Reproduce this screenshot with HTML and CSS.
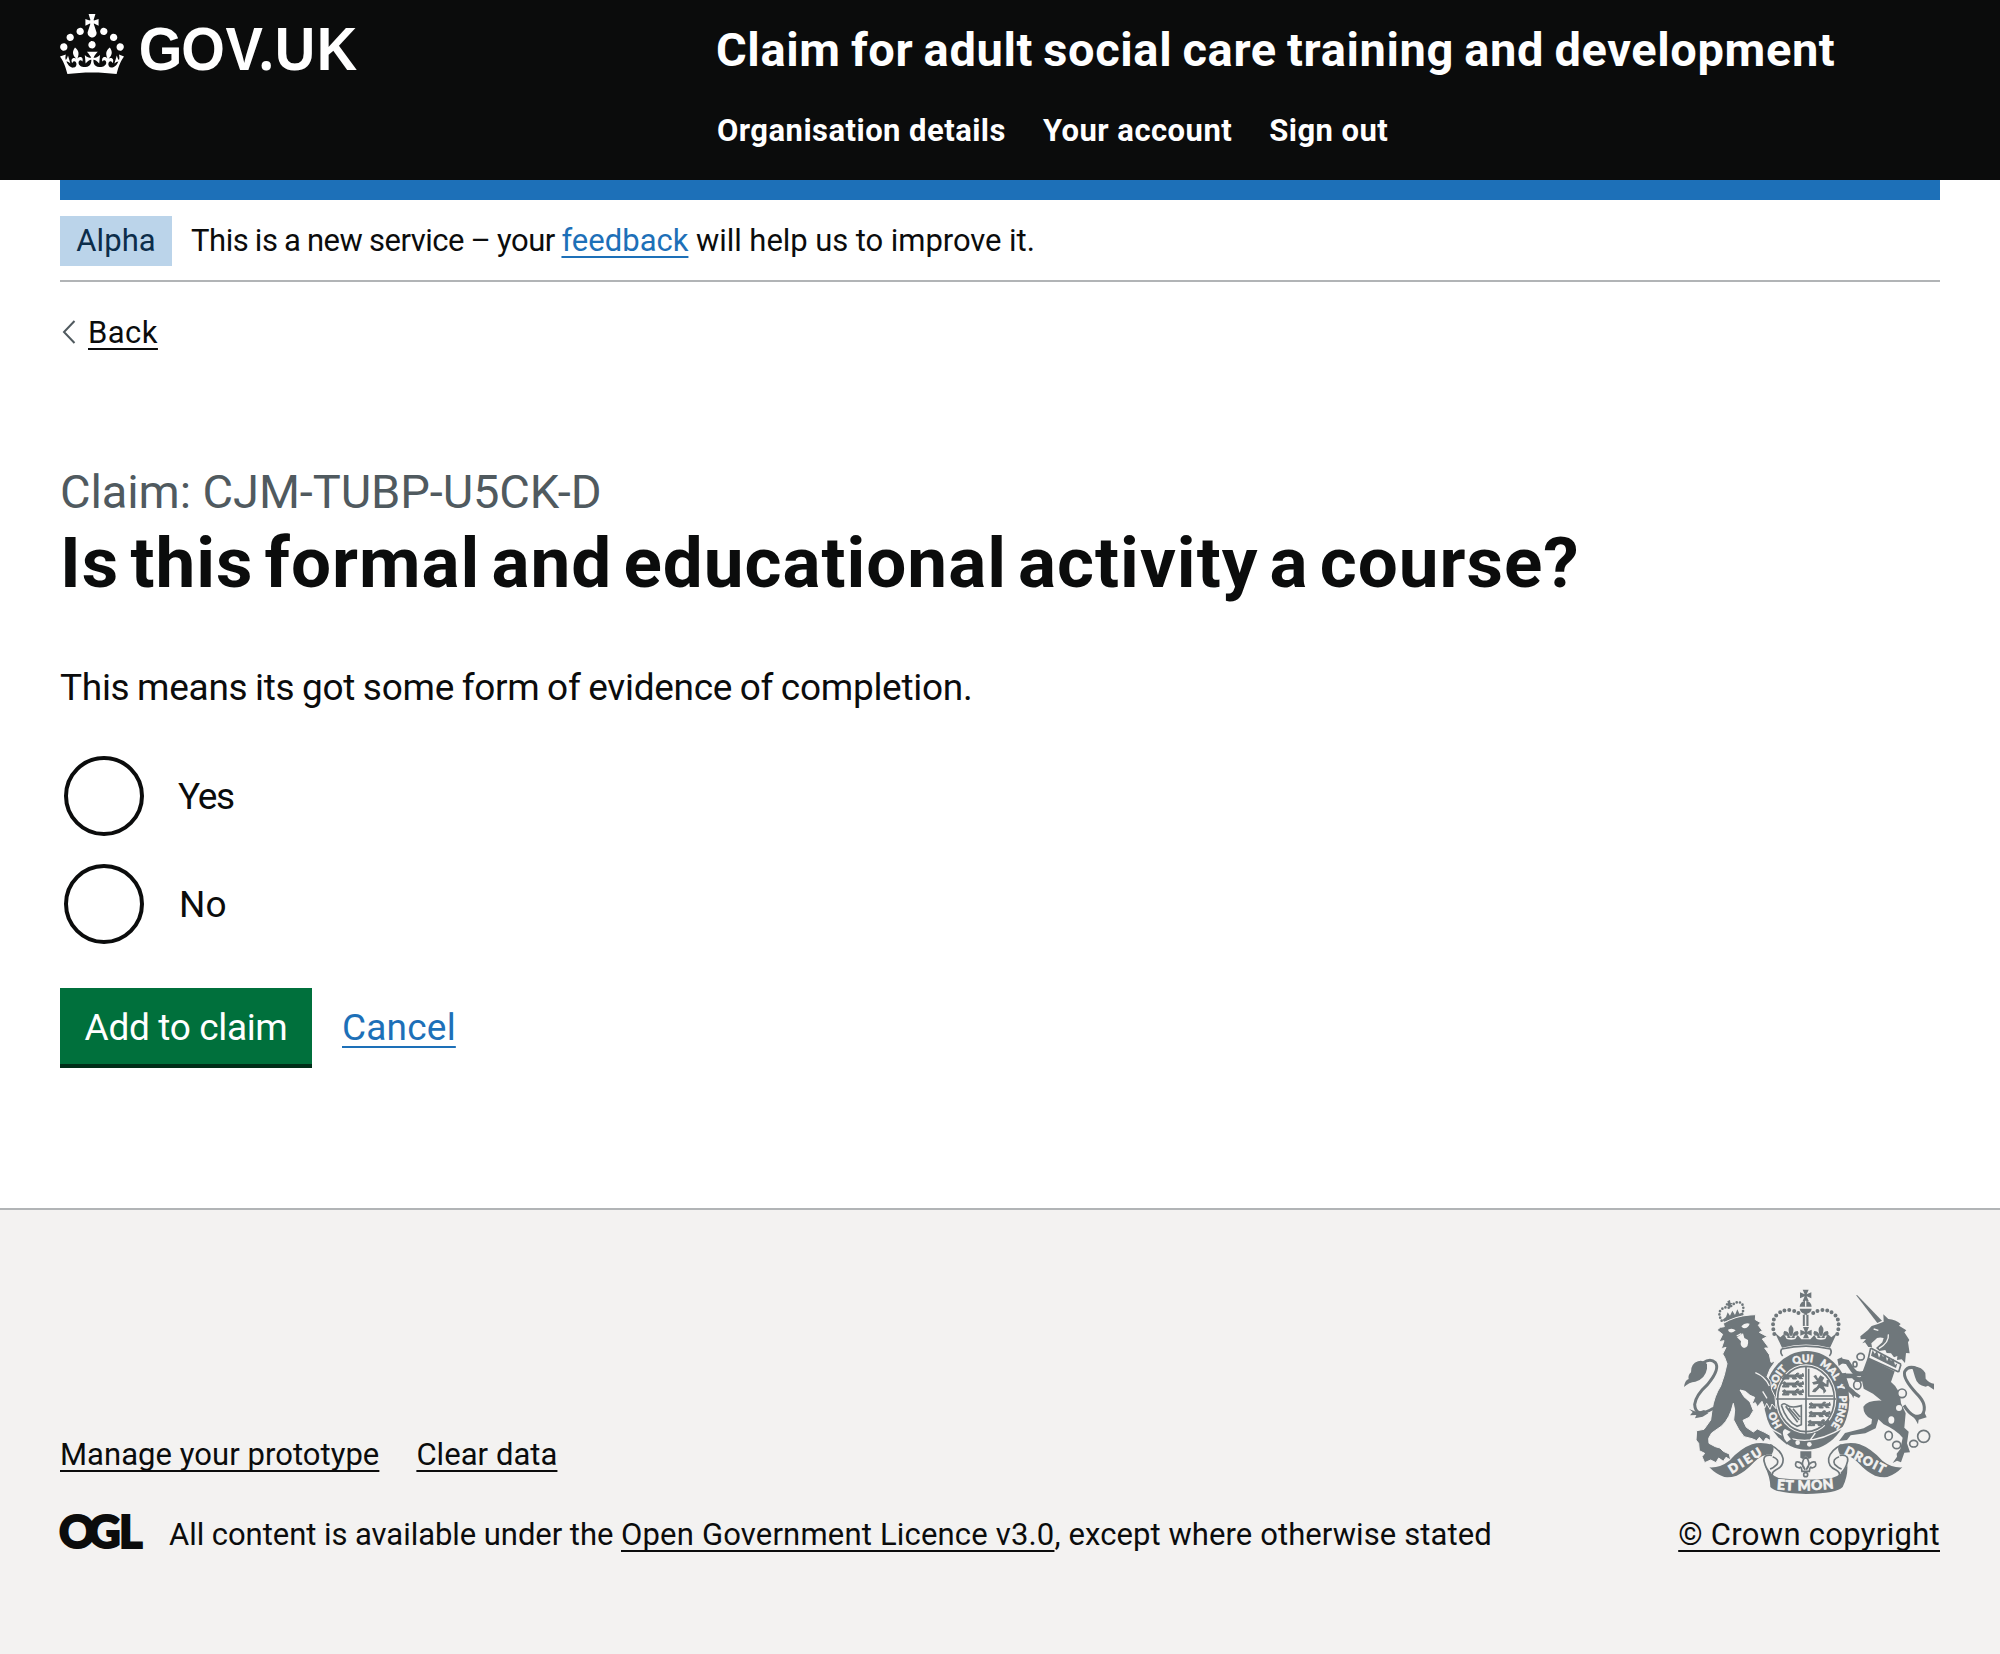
FILE: index.html
```html
<!DOCTYPE html>
<html lang="en">
<head>
<meta charset="utf-8">
<title>Is this formal and educational activity a course?</title>
<link rel="stylesheet" href="styles.css">
</head>
<body>
<header class="header">
  <a class="logo" aria-label="GOV.UK">
    <svg width="300" height="64" viewBox="0 0 300 64">
      <path transform="scale(2)" fill="currentColor" d="M22.6 10.4c-1 .4-2-.1-2.4-1-.4-.9.1-2 1-2.4.9-.4 2 .1 2.4 1s-.1 2-1 2.4m-5.9 6.7c-.9.4-2-.1-2.4-1-.4-.9.1-2 1-2.4.9-.4 2 .1 2.4 1s-.1 2-1 2.4m10.8-3.7c-1 .4-2-.1-2.4-1-.4-.9.1-2 1-2.4.9-.4 2 .1 2.4 1s0 2-1 2.4m3.3 4.8c-1 .4-2-.1-2.4-1-.4-.9.1-2 1-2.4.9-.4 2 .1 2.4 1s-.1 2-1 2.4M17 4.7l2.3 1.2V2.5l-2.3.7-.2-.2.9-3h-3.4l.9 3-.2.2c-.1.1-2.3-.7-2.3-.7v3.4L15 4.7c.1.1.1.2.2.2l-1.3 4c-.1.2-.1.4-.1.6 0 1.1.8 2 1.9 2.2h.7c1-.2 1.9-1.1 1.9-2.1 0-.2 0-.4-.1-.6l-1.3-4c-.1-.2 0-.2.1-.3m-7.6 5.7c.9.4 2-.1 2.4-1 .4-.9-.1-2-1-2.4-.9-.4-2 .1-2.4 1s0 2 1 2.4m-5 3c.9.4 2-.1 2.4-1 .4-.9-.1-2-1-2.4-.9-.4-2 .1-2.4 1s.1 2 1 2.4m-3.2 4.8c.9.4 2-.1 2.4-1 .4-.9-.1-2-1-2.4-.9-.4-2 .1-2.4 1s0 2 1 2.4m14.8 11c4.4 0 8.6.3 12.3.8 1.1-4.5 2.4-7 3.7-8.8l-2.5-.9c.2 1.3.3 1.9 0 2.7-.4-.4-.8-1.1-1.1-2.3l-1.2 4c.7-.5 1.3-.8 2-.9-1.1 2.5-2.6 3.1-3.5 3-1.1-.2-1.7-1.2-1.5-2.1.3-1.2 1.5-1.5 2.1-.1 1.1-2.3-.8-3-2-2.3 1.9-1.9 2.1-3.5.6-5.6-2.1 1.6-2.1 3.2-1.2 5.5-1.2-1.4-3.2-.6-2.5 1.6.9-1.4 2.1-.5 1.9.8-.2 1.1-1.7 2.1-3.5 1.9-2.7-.2-2.9-2.1-2.9-3.6.7-.1 1.9.5 2.9 1.9l.4-4.3c-1.1 1.1-2.1 1.4-3.2 1.4.4-1.2 2.1-3 2.1-3h-5.4s1.7 1.9 2.1 3c-1.1 0-2.1-.2-3.2-1.4l.4 4.3c1-1.4 2.2-2 2.9-1.9-.1 1.5-.2 3.4-2.9 3.6-1.9.2-3.4-.8-3.5-1.9-.2-1.3 1-2.2 1.9-.8.7-2.3-1.2-3-2.5-1.6.9-2.2.9-3.9-1.2-5.5-1.5 2-1.3 3.7.6 5.6-1.2-.7-3.1 0-2 2.3.6-1.4 1.8-1.1 2.1.1.2.9-.3 1.9-1.5 2.1-.9.2-2.4-.5-3.5-3 .6 0 1.2.3 2 .9l-1.2-4c-.3 1.1-.7 1.9-1.1 2.3-.3-.8-.2-1.4 0-2.7l-2.9.9C1.3 23 2.6 25.5 3.7 30c3.7-.5 7.9-.8 12.3-.8"/>
      <text class="wordmark" transform="scale(.92 1)" x="85.6 131.8 180 216 233.500 279" y="56">GOV<tspan class="wordmark-dot">.</tspan>UK</text>
    </svg>
  </a>
  <div class="header-content">
    <div class="service-name">Claim for adult social care training and development</div>
    <nav class="nav"><a>Organisation details</a><a>Your account</a><a>Sign out</a></nav>
  </div>
</header>

<div class="container">
  <div class="blue-bar"></div>
  <div class="phase-banner">
    <strong class="tag">Alpha</strong>
    <p class="phase-text"><span class="phase-lead">This is a new service – your </span><a class="link">feedback</a><span class="phase-tail"> will help us to improve it.</span></p>
  </div>
  <div class="back">
    <svg width="14" height="24" viewBox="0 0 14 24"><path d="M12.5 1 2 12l10.500 11" fill="none" stroke="#505a5f" stroke-width="2"/></svg>
    <a class="link link-dark">Back</a>
  </div>
  <main class="main">
    <span class="caption">Claim: CJM-TUBP-U5CK-D</span>
    <h1 class="heading">Is this formal and educational activity a course?</h1>
    <p class="body-text">This means its got some form of evidence of completion.</p>
    <div class="radios">
      <label class="radio"><span class="circle"></span><span class="radio-label radio-yes">Yes</span></label>
      <label class="radio"><span class="circle"></span><span class="radio-label">No</span></label>
    </div>
    <div class="buttons"><button class="button">Add to claim</button><a class="link cancel">Cancel</a></div>
  </main>
</div>

<footer class="footer">
  <div class="footer-meta">
    <div class="footer-links"><a class="link link-dark">Manage your prototype</a><a class="link link-dark">Clear data</a></div>
    <div class="licence">
      <svg width="83" height="36" viewBox="0 0 83 36" aria-label="OGL"><text class="ogl" x="-1 28 59" y="34">OGL</text></svg>
      <span class="licence-text"><span class="licence-lead">All content is available under the </span><a class="link link-dark licence-link">Open Government Licence v3.0</a>, except where otherwise stated</span>
    </div>
  </div>
  <div class="copyright">
    <svg class="crest" width="250" height="205" viewBox="42 27 750 615">
      <defs>
        <path id="garter" d="M410 476A98 115 0 0 1 410 246A98 115 0 0 1 410 476"/>
        <path id="scroll" d="M320 628Q408 636 500 624"/>
        <g id="fleur"><path d="M0-24Q-15-8 0 12Q15-8 0-24M-3 14Q-6-6-20-5Q-27 4-16 9Q-9 6-11 16H11Q9 6 16 9Q27 4 20-5Q6-6 3 14Z"/></g>
        <g id="patee"><path d="M-9-17H9L3-3 17-9V9L3 3 9 17H-9L-3 3-17 9V-9L-3-3Z"/></g>
        <g id="passant"><path d="M0 7L7 3 12 7H38L44 1 50 2 46 8 58 6 62 2 64 11 55 13 61 18H51L48 13H38L43 19H31L29 13H19L20 19H9L14 13H8L10 19H0L4 11Z"/></g>
        <g id="ribbon">
          <path d="M118 562Q150 564 178 542Q212 505 246 493Q272 484 307 494Q315 505 306 522Q276 522 252 547Q224 577 200 587Q180 593 163 591Q139 584 118 562Z"/>
          <path class="line" d="M300 494Q333 510 339 535Q342 559 317 570Q304 577 307 588M306 526Q279 522 282 543Q288 568 302 580M308 530Q329 538 321 553Q309 565 300 567"/>
        </g>
      </defs>

      <!-- central crown -->
      <use href="#patee" x="407" y="46"/>
      <path d="M389 80A18 18 0 0 1 425 80ZM389 86H425Q424 98 411 101V137H403V101Q391 98 389 86Z"/>
      <path class="line" d="M401 104V138M413 104V138"/>
      <path class="cut" d="M407 62V80M407 104V137"/>
      <path class="beads" d="M313 162Q302 120 322 103Q343 86 365 91Q384 94 392 106M502 162Q513 120 493 103Q472 86 450 91Q431 94 423 106"/>
      <use href="#fleur" x="363" y="158"/><use href="#fleur" x="453" y="158"/><use href="#patee" x="408" y="158"/>
      <path d="M315 158L331 172 342 162 350 177Q364 182 376 177L383 165 394 178H421L433 165 440 177Q453 182 466 177L473 162 484 172 501 158 480 203Q408 184 336 203Z"/>
      <path class="line" d="M335 207Q408 190 481 207Q487 218 478 228M335 207Q329 218 338 228"/>

      <!-- garter -->
      <ellipse cx="410" cy="361" rx="128" ry="148"/>
      <ellipse class="ground" cx="408" cy="357" rx="91" ry="104"/>
      <ellipse class="line" cx="408" cy="357" rx="85" ry="98"/>
      <path class="line" d="M408 258V466M318 357H498M416 266V348H489"/>
      <g class="lions" transform="translate(337 278)"><use href="#passant" y="0"/><use href="#passant" y="24"/><use href="#passant" y="48"/></g>
      <g class="lions" transform="translate(417 365)"><use href="#passant" y="0"/><use href="#passant" y="26"/><use href="#passant" x="-3" y="53"/></g>
      <path d="M430 289L438 284 444 296 451 286 463 293 457 304 469 313 470 300 477 300 475 321 461 319 469 333 461 341 459 331 449 323 436 337 426 336 431 327 440 321 446 311 431 314 426 307 441 303Z"/>
      <path class="line" d="M334 376Q342 367 350 375Q364 386 394 377V434L381 439Q350 425 334 376M347 379L383 427M357 384L388 420M369 386L390 411"/>
      <path class="cut" d="M293 437Q345 481 404 481Q460 481 524 440M420 481L436 459"/>
      <circle class="ground" cx="383" cy="488" r="7"/><circle class="ground" cx="418" cy="493" r="7"/>
      <path class="buckle" d="M345 444Q333 450 337 465Q339 480 350 490L366 478 355 464 367 455Z"/>
      <g class="motto">
        <text><textPath href="#garter" startOffset="86">HO</textPath></text>
        <text><textPath href="#garter" startOffset="200">SOIT</textPath></text>
        <text><textPath href="#garter" startOffset="295">QUI</textPath></text>
        <text><textPath href="#garter" startOffset="374">MAL</textPath></text>
        <text><textPath href="#garter" startOffset="453">Y</textPath></text>
        <text><textPath href="#garter" startOffset="488">PENSE</textPath></text>
      </g>

      <!-- lion -->
      <path class="beads small" d="M155 122Q142 100 154 88Q169 78 178 84Q197 62 211 68Q226 76 216 104"/>
      <path d="M158 119L168 111 173 97 180 107 187 92 195 105 202 88 208 101 219 97 220 106 162 125ZM172 64L180 60 181 68 188 70 182 75 181 85 174 77 167 76 168 70 174 70Z"/>
      <path class="edged" d="M141 150L151 142 163 140 160 130Q196 108 240 105L257 104 256 119 272 128 265 136 277 152 268 157 292 170 277 177 297 204 284 204 298 224 303 247 316 244 300 267 291 290 302 304 305 329 315 350 318 386 306 372 300 388 290 370 284 384 276 364 262 380 256 368 246 372 254 352 240 346 226 334 210 330 222 350 240 366 250 392 238 412 219 421 229 442 250 456 262 447 282 456 300 466 302 482 288 474 280 486 268 472 260 482 246 476 222 470 206 448 191 420 194 390 190 370Q180 415 155 438L125 459 116 475 117 490 136 500 150 504 160 514 178 522 182 540 168 532 160 544 146 534 138 548 122 540 104 548 96 530 104 520 88 512 86 490 78 480 80 452 102 448 122 420 126 390Q133 347 152 318Q164 287 171 251L164 232 158 222 168 202 154 206 162 182 147 185 158 163Z"/>
      <path class="ground" d="M174 149Q187 143 197 151Q184 163 176 154ZM214 139Q224 127 239 131Q234 147 219 144ZM201 172L219 160 223 174 234 180Q237 202 222 204Q209 200 213 184Z"/>
      <path class="cut" d="M256 278Q286 290 298 318M278 334L291 355M200 168L214 161"/>
      <path class="tail" d="M130 385Q76 417 74 373Q77 346 113 313Q151 267 136 248Q121 233 99 249"/>
      <path d="M111 252Q99 239 84 244Q62 251 63 277Q53 286 56 297Q44 302 42 321Q57 306 76 305Q106 296 111 266ZM57 387L68 396 60 406 79 405 75 415 98 410 115 400 102 390 82 397Z"/>

      <!-- unicorn -->
      <path d="M558 45L562 46 636 122 622 129Z"/>
      <path d="M640 103L655 117Q677 119 692 132L687 137 709 151 703 157 718 180 714 187 719 220 708 219 705 249 695 238 681 240 682 228 672 232 663 220 650 219 646 210 628 213 618 204 637 187 641 174Q621 170 615 180L604 190 606 201 595 201 585 187 577 190 588 177 572 178 571 169 594 150 605 138 624 132 641 125Z"/>
      <path class="cut" d="M655 163Q658 187 627 205M611 147L625 151"/>
      <path class="line" d="M602 204L693 253M595 235L686 276M602 204L595 235M693 253L686 276"/>
      <path d="M603 227L608 210 614 221 621 213 627 233 633 219 639 230 646 224 651 244 657 231 663 242 670 236 675 255 682 250 678 264 673 262Z"/>
      <path d="M593 233L674 274 663 306Q691 327 693 370L707 400 703 443 716 455 711 490 720 517 703 518 693 547 681 542 668 549 681 530 680 521 691 507 698 473Q677 449 641 433L625 418 617 445 586 460 542 466 531 480 507 483 525 459 581 445 604 432 606 418Q580 407 580 380Q593 360 635 362L609 341 581 326 573 288Z"/>
      <path class="leg" d="M587 277Q560 289 548 270L532 246 510 242M581 294Q562 306 550 288L520 287 532 323 550 339"/>
      <path d="M502 238L516 232 520 248 506 258ZM545 327L572 347 567 354 552 347 550 355 540 334ZM508 283L528 278 526 294 521 315 513 309Z"/>
      <g class="chain"><ellipse cx="572" cy="230" rx="11" ry="10"/><ellipse cx="555" cy="253" rx="6" ry="8"/><ellipse cx="562" cy="315" rx="11" ry="13"/><circle class="fill" cx="696" cy="340" r="13"/><ellipse cx="656" cy="467" rx="11" ry="13"/><ellipse cx="680" cy="495" rx="12" ry="11"/><ellipse cx="731" cy="491" rx="12" ry="10"/><circle cx="761" cy="469" r="18"/></g>
      <circle class="ground" cx="687" cy="384" r="9"/><ellipse class="ground" cx="664" cy="420" rx="9" ry="11"/>
      <path class="tail" d="M702 376Q731 422 757 404Q775 376 740 341Q698 296 704 275Q714 255 742 266"/>
      <path d="M726 261Q752 256 766 279L767 296Q778 309 792 311V329L774 317 767 320Q741 316 735 291ZM706 387L735 417 740 425 744 433 746 419 770 412 763 397 736 410Z"/>

      <!-- pendant and scroll -->
      <path d="M391 514H424V533L416 537 407 527 399 537 391 533Z"/>
      <path class="line" d="M407 530Q388 549 405 569Q394 542 379 546Q371 560 388 564Q394 556 396 574H418Q420 556 426 564Q443 560 435 546Q420 542 409 569Q426 549 407 530"/>
      <circle class="line" cx="407" cy="584" r="6"/>
      <use href="#ribbon"/><use href="#ribbon" transform="translate(815 0) scale(-1 1)"/>
      <path d="M283 555Q298 583 326 594Q408 604 486 594Q518 585 532 555Q534 590 518 621Q502 640 408 642Q315 640 301 621Q301 592 283 555Z"/>
      <g class="scroll">
        <text transform="translate(185 582) rotate(-32)" textLength="110">DIEU</text>
        <text transform="translate(521 521) rotate(27)" textLength="132">DROIT</text>
        <text class="scroll-center"><textPath href="#scroll" textLength="172">ET MON</textPath></text>
      </g>
    </svg>
    <a class="link link-dark crown-link">© Crown copyright</a>
  </div>
</footer>
</body>
</html>
```
FILE: styles.css
```css
* { box-sizing: border-box; }
body { margin: 0; background: #fff; color: #0b0c0c; font: 400 31px/50px Roboto, "Liberation Sans", sans-serif; }
p, h1 { margin: 0; }

.header { height: 180px; padding: 14px 60px 0; background: #0b0c0c; color: #fff; display: flex; }
.logo { width: 656px; display: block; }
.logo svg { display: block; overflow: visible; }
.wordmark { font: 700 61px "Liberation Sans", sans-serif; fill: currentColor; }
.wordmark-dot { font: 700 58px "Noto Sans", sans-serif; }
.header-content { padding-top: 6px; font-weight: 700; }
.service-name { font-size: 47px; line-height: 60px; letter-spacing: .62px; word-spacing: -2px; white-space: nowrap; }
.nav { display: flex; gap: 37px; margin: 26px 0 0 1px; letter-spacing: .46px; }

.container { margin: 0 60px; }
.blue-bar { height: 20px; background: #1d70b8; }
.phase-banner { display: flex; gap: 19px; padding: 16px 0 14px; border-bottom: 2px solid #b1b4b6; }
.tag { width: 112px; background: #bbd4ea; color: #0c2d4a; font-weight: 400; text-align: center; letter-spacing: .1px; }
.phase-text { white-space: pre; }
.phase-lead { letter-spacing: -.46px; word-spacing: -.7px; }
.phase-tail { letter-spacing: -.06px; }

.link { color: #1d70b8; text-decoration: underline; text-decoration-thickness: 2px; text-underline-offset: 5px; text-decoration-skip-ink: none; }
.link-dark { color: #0b0c0c; }

.back { display: flex; align-items: center; gap: 12px; margin: 25px 0 0 2px; letter-spacing: .45px; }
.back .link { padding-top: 1px; margin-bottom: -1px; }

.main { padding-top: 105px; }
.caption { display: block; color: #505a5f; font-size: 47px; line-height: 60px; letter-spacing: -.1px; }
.heading { margin-top: 3px; font-size: 71px; line-height: 76px; font-weight: 700; letter-spacing: 1px; word-spacing: -7.500px; }
.body-text { margin: 62px 0 -1px; font-size: 37px; letter-spacing: -.29px; word-spacing: -1.200px; }
.radios { display: grid; gap: 28px; margin-top: 44px; padding-left: 4px; }
.radio { display: flex; align-items: center; gap: 35px; font-size: 37px; }
.radio-label { padding-top: 2px; }
.radio-yes { margin-left: -1px; letter-spacing: -1.300px; }
.circle { width: 80px; height: 80px; border: 4px solid #0b0c0c; border-radius: 50%; }
.buttons { display: flex; align-items: center; gap: 30px; margin-top: 44px; font-size: 37px; }
.button { width: 252px; height: 80px; padding: 3px 0 0; border: 0; border-bottom: 4px solid #002d18; background: #00703c; color: #fff; font: inherit; letter-spacing: -.35px; }
.cancel { letter-spacing: .2px; text-underline-offset: 6px; }

.footer { display: flex; justify-content: space-between; align-items: flex-start; height: 446px; margin-top: 140px; padding: 79px 60px 0; border-top: 2px solid #b1b4b6; background: #f3f2f1; }
.footer-meta { padding-top: 141px; }
.footer-links { display: flex; gap: 37px; letter-spacing: .05px; }
.licence { display: flex; align-items: center; gap: 26px; margin-top: 30px; }
.licence svg { margin-bottom: 7px; overflow: visible; }
.ogl { font: 900 45px Lato, sans-serif; fill: #0b0c0c; stroke: #0b0c0c; stroke-width: 2px; }
.licence-text { white-space: nowrap; letter-spacing: .09px; }
.licence-lead { letter-spacing: -.05px; }
.licence-link { letter-spacing: .18px; }
.copyright { display: flex; flex-direction: column; align-items: flex-end; gap: 16px; }
.crown-link { letter-spacing: .3px; }

.crest { margin-right: 6px; fill: #6f777b; }
.crest .ground { fill: #f3f2f1; }
.crest .line { fill: none; stroke: #6f777b; stroke-width: 5; }
.crest .cut { fill: none; stroke: #f3f2f1; stroke-width: 4; }
.crest .beads { fill: none; stroke: #6f777b; stroke-width: 12; stroke-linecap: round; stroke-dasharray: 0 14.500; }
.crest .small { stroke-width: 8; stroke-dasharray: 0 10; }
.crest .lions { stroke: #6f777b; stroke-width: 3; }
.crest .edged { stroke: #f3f2f1; stroke-width: 3; }
.crest .tail { fill: none; stroke: #6f777b; stroke-width: 9; }
.crest .leg { fill: none; stroke: #6f777b; stroke-width: 14; }
.crest .buckle { fill: #f3f2f1; stroke: #6f777b; stroke-width: 5; }
.crest .chain { fill: none; stroke: #6f777b; stroke-width: 5; }
.crest .fill { fill: #f3f2f1; }
.crest text { fill: #f3f2f1; stroke: #f3f2f1; stroke-width: 1.500; font: 900 31px Lato, sans-serif; }
.crest .scroll text { font-size: 37px; stroke-width: 2; }
.crest .scroll .scroll-center { font-size: 41px; }
```
